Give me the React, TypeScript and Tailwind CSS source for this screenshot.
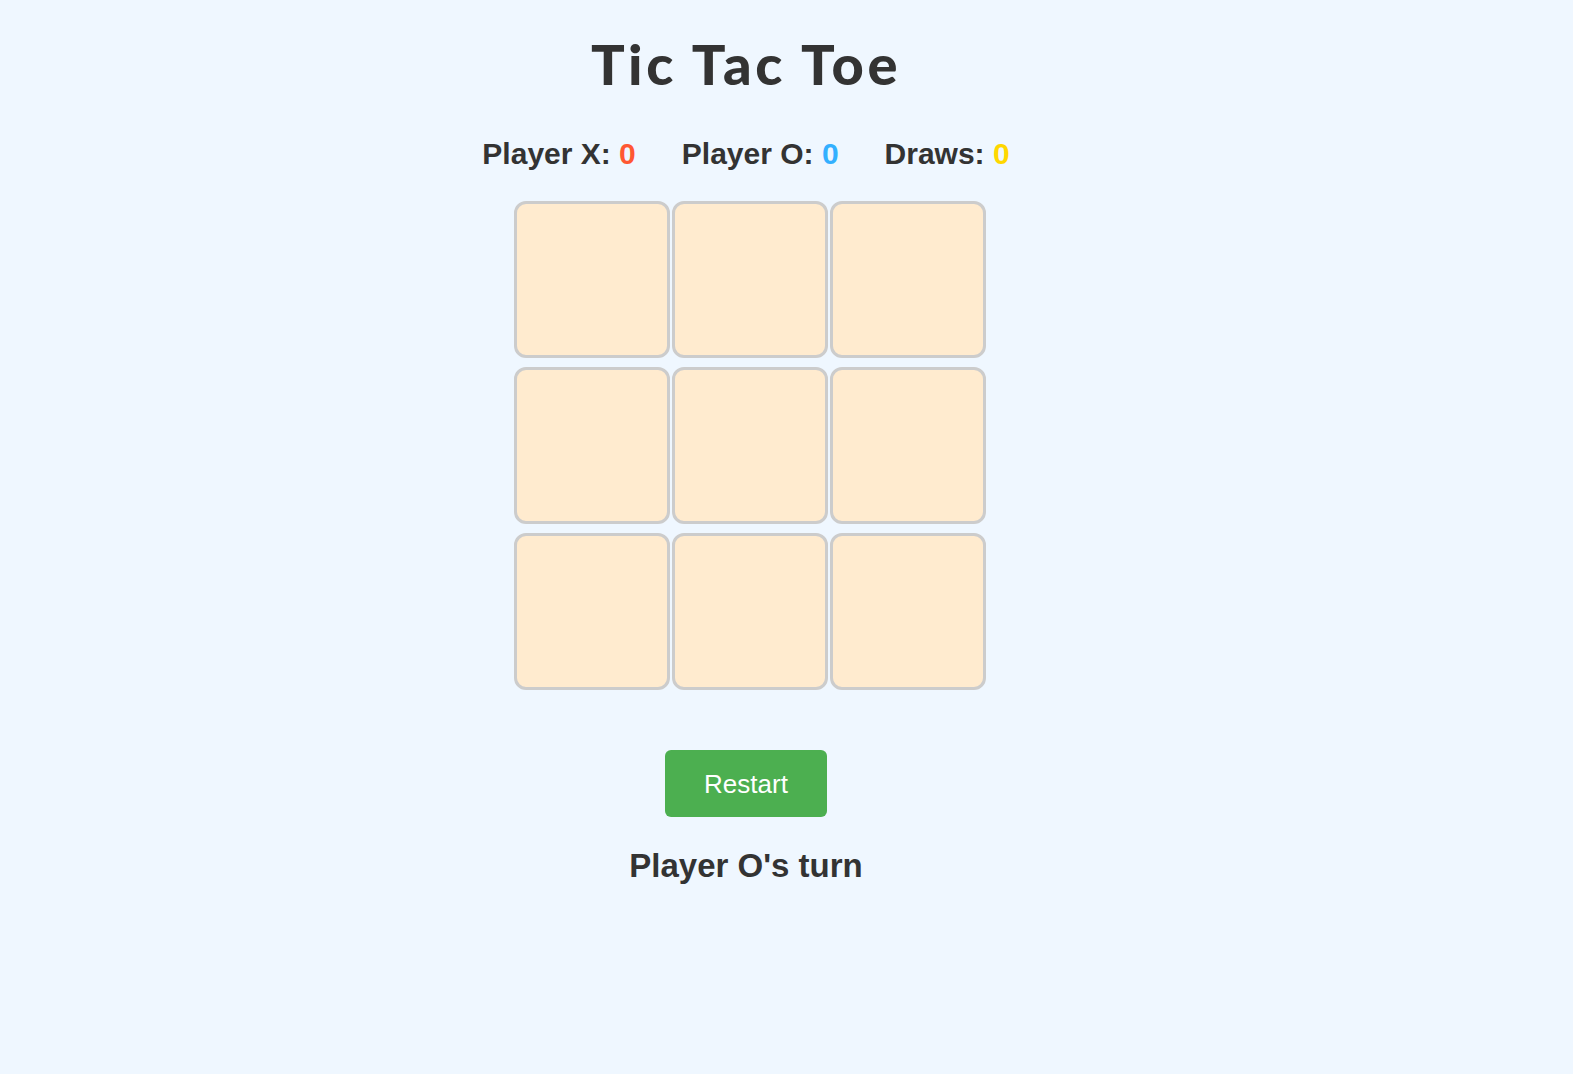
import React from "react";

export default function App() {
  const cells = Array.from({ length: 9 });
  return (
    <div className="min-h-[1074px] w-full bg-[#eff7ff] text-[#333333]">
      <div className="flex w-[1492px] flex-col items-center">
        <h1
          className="mt-[36px] text-[56px] font-black leading-none tracking-[3.5px]"
          style={{ fontFamily: '"Comic Sans MS", "Lato", sans-serif' }}
        >
          Tic Tac Toe
        </h1>
        <div
          className="mt-[47px] flex gap-[46px] text-[30px] font-bold leading-none"
          style={{ fontFamily: '"Liberation Sans", Arial, sans-serif' }}
        >
          <span>
            Player X: <span className="text-[#ff5733]">0</span>
          </span>
          <span>
            Player O: <span className="text-[#33b0ff]">0</span>
          </span>
          <span>
            Draws: <span className="text-[#ffd700]">0</span>
          </span>
        </div>
        <div className="ml-[8px] mt-[32px] grid grid-cols-[repeat(3,156px)] gap-x-[2px] gap-y-[9px]">
          {cells.map((_, i) => (
            <button
              key={i}
              className="h-[157px] w-[156px] rounded-[12px] border-[3px] border-[#cccccc] bg-[#ffebcf]"
            />
          ))}
        </div>
        <button
          className="mt-[60px] h-[67px] w-[162px] rounded-[6px] bg-[#4caf50] text-[26px] leading-none text-white"
          style={{ fontFamily: '"Liberation Sans", Arial, sans-serif' }}
        >
          Restart
        </button>
        <div
          className="mt-[32px] text-[33px] font-bold leading-none"
          style={{ fontFamily: '"Liberation Sans", Arial, sans-serif' }}
        >
          Player O's turn
        </div>
      </div>
    </div>
  );
}
